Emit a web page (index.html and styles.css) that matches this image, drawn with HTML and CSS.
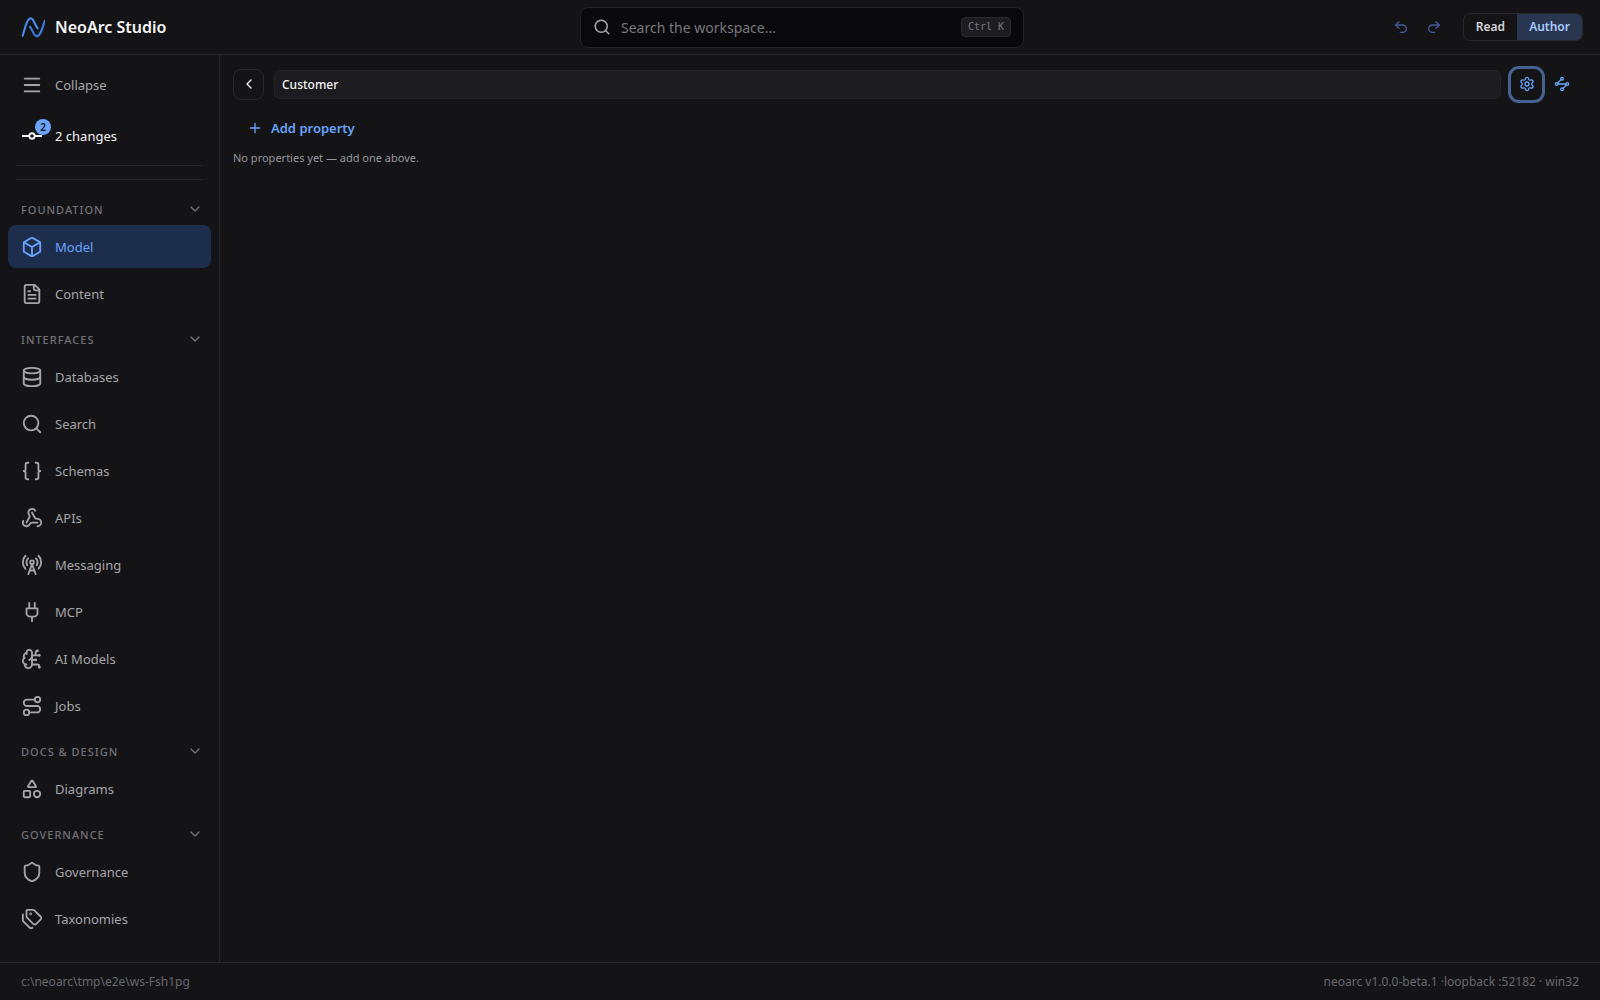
FILE: index.html
```html
<!DOCTYPE html>
<html lang="en">

<head>
    <meta charset="UTF-8">
    <meta name="viewport" content="width=device-width, initial-scale=1.0">
    <title>NeoArc Studio</title>
    <link rel="stylesheet" href="styles.css">
</head>

<body>
    <!-- Top bar -->
    <header class="topbar">
        <div class="brand">
            <svg class="logo" viewBox="0 0 24 24"><path class="logo-main" d="M1.700 20.700C3.500 14.500 6 3.300 9.700 3.300c3 0 3.800 6.500 7 10"/><path class="logo-inner" d="M9 11.700c2.500 2.500 3.500 9.500 6.700 9.500 3.800 0 6-8.500 8-15.500"/></svg>
            <span>NeoArc Studio</span>
        </div>

        <div class="search">
            <svg class="icon icon-sm" viewBox="0 0 24 24"><circle cx="11" cy="11" r="8"/><path d="m21 21-4.300-4.300"/></svg>
            <input type="text" placeholder="Search the workspace..." aria-label="Search the workspace">
            <kbd>Ctrl K</kbd>
        </div>

        <div class="actions">
            <button class="history" aria-label="Undo"><svg class="icon icon-xs" viewBox="0 0 24 24"><path d="M9 14 4 9l5-5"/><path d="M4 9h10.5a5.5 5.5 0 0 1 0 11H11"/></svg></button>
            <button class="history" aria-label="Redo"><svg class="icon icon-xs" viewBox="0 0 24 24"><path d="m15 14 5-5-5-5"/><path d="M20 9H9.500a5.500 5.500 0 0 0 0 11H13"/></svg></button>
            <div class="mode">
                <button>Read</button>
                <button class="selected">Author</button>
            </div>
        </div>
    </header>

    <div class="workspace">
        <!-- Sidebar -->
        <aside class="sidebar">
            <button class="nav-item"><svg class="icon" viewBox="0 0 24 24"><path d="M4 5h16M4 12h16M4 19h16"/></svg>Collapse</button>
            <button class="nav-item changes">
                <span class="changes-icon">
                    <svg class="icon" viewBox="0 0 24 24"><circle cx="12" cy="12" r="3"/><path d="M2 12h7M15 12h7"/></svg>
                    <span class="badge">2</span>
                </span>
                2 changes
            </button>
            <div class="divider"></div>

            <nav>
                <section class="group">
                    <button class="group-title">Foundation <svg class="icon icon-xs" viewBox="0 0 24 24"><path d="m6 9 6 6 6-6"/></svg></button>
                    <a href="#model" class="nav-item active"><svg class="icon" viewBox="0 0 24 24"><path d="M21 8a2 2 0 0 0-1-1.730l-7-4a2 2 0 0 0-2 0l-7 4A2 2 0 0 0 3 8v8a2 2 0 0 0 1 1.730l7 4a2 2 0 0 0 2 0l7-4A2 2 0 0 0 21 16Z"/><path d="m3.300 7 8.700 5 8.700-5M12 22V12"/></svg>Model</a>
                    <a href="#content" class="nav-item"><svg class="icon" viewBox="0 0 24 24"><path d="M15 2H6a2 2 0 0 0-2 2v16a2 2 0 0 0 2 2h12a2 2 0 0 0 2-2V7Z"/><path d="M14 2v4a2 2 0 0 0 2 2h4M10 9H8M16 13H8M16 17H8"/></svg>Content</a>
                </section>

                <section class="group">
                    <button class="group-title">Interfaces <svg class="icon icon-xs" viewBox="0 0 24 24"><path d="m6 9 6 6 6-6"/></svg></button>
                    <a href="#databases" class="nav-item"><svg class="icon" viewBox="0 0 24 24"><ellipse cx="12" cy="5" rx="9" ry="3"/><path d="M3 5v14a9 3 0 0 0 18 0V5"/><path d="M3 12a9 3 0 0 0 18 0"/></svg>Databases</a>
                    <a href="#search" class="nav-item"><svg class="icon" viewBox="0 0 24 24"><circle cx="11" cy="11" r="8"/><path d="m21 21-4.300-4.300"/></svg>Search</a>
                    <a href="#schemas" class="nav-item"><svg class="icon" viewBox="0 0 24 24"><path d="M8 3H7a2 2 0 0 0-2 2v5a2 2 0 0 1-2 2 2 2 0 0 1 2 2v5a2 2 0 0 0 2 2h1"/><path d="M16 21h1a2 2 0 0 0 2-2v-5a2 2 0 0 1 2-2 2 2 0 0 1-2-2V5a2 2 0 0 0-2-2h-1"/></svg>Schemas</a>
                    <a href="#apis" class="nav-item"><svg class="icon" viewBox="0 0 24 24"><path d="M18 16.980h-5.990c-1.100 0-1.950.94-2.480 1.900A4 4 0 0 1 2 17c.01-.7.2-1.400.57-2"/><path d="m6 17 3.130-5.780c.53-.97.1-2.180-.5-3.100a4 4 0 1 1 6.890-4.060"/><path d="m12 6 3.130 5.730C15.660 12.700 16.900 13 18 13a4 4 0 0 1 0 8"/></svg>APIs</a>
                    <a href="#messaging" class="nav-item"><svg class="icon" viewBox="0 0 24 24"><path d="M4.900 16.100C1 12.200 1 5.800 4.900 1.900M7.800 4.700a6.140 6.140 0 0 0-.8 7.500"/><circle cx="12" cy="9" r="2"/><path d="M16.200 4.800c2 2 2.260 5.110.8 7.470M19.100 1.900a9.960 9.960 0 0 1 0 14.100M9.500 18h5M8 22l4-11 4 11"/></svg>Messaging</a>
                    <a href="#mcp" class="nav-item"><svg class="icon" viewBox="0 0 24 24"><path d="M12 22v-5M9 8V2M15 8V2M18 8v5a4 4 0 0 1-4 4h-4a4 4 0 0 1-4-4V8Z"/></svg>MCP</a>
                    <a href="#ai-models" class="nav-item"><svg class="icon" viewBox="0 0 24 24"><path d="M12 5a3 3 0 1 0-5.997.125 4 4 0 0 0-2.526 5.770 4 4 0 0 0 .556 6.588A4 4 0 1 0 12 18Z"/><path d="M9 13a4.500 4.500 0 0 0 3-4M6.003 5.125A3 3 0 0 0 6.401 6.500M3.477 10.896a4 4 0 0 1 .585-.396M6 18a4 4 0 0 1-1.967-.516M12 13h4M12 18h6a2 2 0 0 1 2 2v1M12 8h8M16 8V5a2 2 0 0 1 2-2"/><circle cx="16" cy="13" r=".5"/><circle cx="18" cy="3" r=".5"/><circle cx="20" cy="21" r=".5"/><circle cx="20" cy="8" r=".5"/></svg>AI Models</a>
                    <a href="#jobs" class="nav-item"><svg class="icon" viewBox="0 0 24 24"><circle cx="6" cy="19" r="3"/><path d="M9 19h8.500a3.500 3.500 0 0 0 0-7h-11a3.500 3.500 0 0 1 0-7H15"/><circle cx="18" cy="5" r="3"/></svg>Jobs</a>
                </section>

                <section class="group">
                    <button class="group-title">Docs &amp; Design <svg class="icon icon-xs" viewBox="0 0 24 24"><path d="m6 9 6 6 6-6"/></svg></button>
                    <a href="#diagrams" class="nav-item"><svg class="icon" viewBox="0 0 24 24"><path d="M8.300 10a.7.7 0 0 1-.626-1.079L11.400 3a.7.7 0 0 1 1.198-.043L16.300 8.900a.7.7 0 0 1-.572 1.100Z"/><rect x="3" y="14" width="7" height="7" rx="1"/><circle cx="17.500" cy="17.500" r="3.500"/></svg>Diagrams</a>
                </section>

                <section class="group">
                    <button class="group-title">Governance <svg class="icon icon-xs" viewBox="0 0 24 24"><path d="m6 9 6 6 6-6"/></svg></button>
                    <a href="#governance" class="nav-item"><svg class="icon" viewBox="0 0 24 24"><path d="M20 13c0 5-3.500 7.500-7.660 8.950a1 1 0 0 1-.67-.01C7.500 20.500 4 18 4 13V6a1 1 0 0 1 1-1c2 0 4.500-1.200 6.240-2.720a1.170 1.170 0 0 1 1.520 0C14.510 3.810 17 5 19 5a1 1 0 0 1 1 1z"/></svg>Governance</a>
                    <a href="#taxonomies" class="nav-item"><svg class="icon" viewBox="0 0 24 24"><path d="M13.172 2a2 2 0 0 1 1.414.586l6.710 6.710a2.400 2.400 0 0 1 0 3.408l-4.592 4.592a2.400 2.400 0 0 1-3.408 0l-6.710-6.710A2 2 0 0 1 6 9.172V3a1 1 0 0 1 1-1z"/><path d="M2 7v6.172a2 2 0 0 0 .586 1.414l6.710 6.710a2.400 2.400 0 0 0 3.191.193"/><circle cx="10.500" cy="6.500" r=".5"/></svg>Taxonomies</a>
                </section>
            </nav>
        </aside>

        <!-- Entity editor -->
        <main class="editor">
            <div class="editor-bar">
                <button class="back" aria-label="Back"><svg class="icon icon-xs" viewBox="0 0 24 24"><path d="m15 18-6-6 6-6"/></svg></button>
                <input class="entity-name" type="text" value="Customer" aria-label="Entity name">
                <button class="tool focused" aria-label="Settings"><svg class="icon icon-xs" viewBox="0 0 24 24"><path d="M9.671 4.136a2.340 2.340 0 0 1 4.659 0 2.340 2.340 0 0 0 3.319 1.915 2.340 2.340 0 0 1 2.330 4.033 2.340 2.340 0 0 0 0 3.831 2.340 2.340 0 0 1-2.330 4.033 2.340 2.340 0 0 0-3.319 1.915 2.340 2.340 0 0 1-4.659 0 2.340 2.340 0 0 0-3.320-1.915 2.340 2.340 0 0 1-2.330-4.033 2.340 2.340 0 0 0 0-3.831A2.340 2.340 0 0 1 6.350 6.051a2.340 2.340 0 0 0 3.319-1.915"/><circle cx="12" cy="12" r="3"/></svg></button>
                <button class="tool" aria-label="Relationships"><svg class="icon icon-xs" viewBox="0 0 24 24"><path d="m10.586 5.414-5.172 5.172M18.586 13.414l-5.172 5.172M6 12h12"/><circle cx="12" cy="20" r="2"/><circle cx="12" cy="4" r="2"/><circle cx="20" cy="12" r="2"/><circle cx="4" cy="12" r="2"/></svg></button>
            </div>
            <button class="add"><svg class="icon icon-xs" viewBox="0 0 24 24"><path d="M5 12h14M12 5v14"/></svg>Add property</button>
            <p class="empty">No properties yet — add one above.</p>
        </main>
    </div>

    <!-- Status bar -->
    <footer class="statusbar">
        <span>c:\neoarc\tmp\e2e\ws-Fsh1pg</span>
        <span>neoarc v1.0.0-beta.1 ·loopback :52182 · win32</span>
    </footer>
</body>

</html>
```

FILE: styles.css
```css
* {
    box-sizing: border-box;
}

body {
    margin: 0;
    min-height: 100vh;
    display: flex;
    flex-direction: column;
    background-color: #141416;
    color: #f4f4f5;
    font-family: "Noto Sans", "Open Sans", sans-serif;
    font-size: 13px;
}

button,
input {
    margin: 0;
    font-family: inherit;
    font-size: 13px;
    color: inherit;
}

button {
    padding: 0;
    border: none;
    background: none;
    cursor: pointer;
}

.icon {
    width: 22px;
    height: 22px;
    flex-shrink: 0;
    display: block;
    fill: none;
    stroke: currentColor;
    stroke-width: 2;
    stroke-linecap: round;
    stroke-linejoin: round;
}

.icon-sm {
    width: 18px;
    height: 18px;
}

.icon-xs {
    width: 16px;
    height: 16px;
}

/* Top bar */
.topbar {
    display: flex;
    align-items: center;
    height: 55px;
    padding: 0 17px 0 21px;
    border-bottom: 1px solid #29292c;
}

.brand,
.actions {
    flex: 1;
    display: flex;
    align-items: center;
}

.brand {
    gap: 10px;
    font-size: 16px;
    font-weight: 600;
}

.logo {
    width: 24px;
    height: 24px;
    fill: none;
    stroke-width: 2;
    stroke-linecap: round;
}

.logo-main {
    stroke: #4a8ff0;
}

.logo-inner {
    stroke: #3b7de0;
}

.search {
    display: flex;
    align-items: center;
    gap: 10px;
    width: 444px;
    height: 41px;
    padding: 0 12px;
    border: 1px solid #242427;
    border-radius: 8px;
    background-color: #09090b;
    color: #a9a9ae;
}

.search input {
    flex: 1;
    min-width: 0;
    padding: 0;
    border: none;
    outline: none;
    background: none;
    font-size: 14px;
}

.search input::placeholder {
    color: #77777d;
    opacity: 1;
}

kbd {
    padding: 0 6px;
    border: 1px solid #2b2b2f;
    border-radius: 4px;
    background-color: #1d1d21;
    color: #77777d;
    font-family: "DejaVu Sans Mono", monospace;
    font-size: 10px;
    line-height: 18px;
}

.actions {
    justify-content: flex-end;
    gap: 17px;
}

.history {
    color: #42599b;
}

.mode {
    display: flex;
    margin-left: 4px;
    border: 1px solid #29292c;
    border-radius: 7px;
    overflow: hidden;
}

.mode button {
    padding: 0 12px;
    line-height: 26px;
    font-size: 12px;
    font-weight: 600;
    color: #d4d4d8;
}

.mode .selected {
    background-color: #293650;
    color: #a9cbff;
}

/* Sidebar */
.workspace {
    flex: 1;
    display: flex;
}

.sidebar {
    width: 220px;
    flex-shrink: 0;
    padding: 8px;
    border-right: 1px solid #29292c;
}

.nav-item {
    display: flex;
    align-items: center;
    gap: 12px;
    width: 100%;
    height: 43px;
    padding: 0 13px;
    border-radius: 8px;
    color: #a5a5aa;
    text-decoration: none;
}

.nav-item + .nav-item {
    margin-top: 4px;
}

.nav-item.active {
    background-color: #1d2e4d;
    color: #69a3fb;
}

.sidebar .nav-item.changes {
    margin-top: 8px;
    color: #f4f4f5;
}

.changes-icon {
    position: relative;
}

.badge {
    position: absolute;
    top: -6px;
    right: -8px;
    width: 16px;
    height: 16px;
    border-radius: 8px;
    background-color: #69a3fb;
    color: #141416;
    font-size: 10px;
    font-weight: 600;
    line-height: 16px;
    text-align: center;
}

.divider {
    height: 15px;
    margin: 8px 8px 17px;
    border-top: 1px solid #252528;
    border-bottom: 1px solid #252528;
}

.group {
    margin-bottom: 12px;
}

.group-title {
    display: flex;
    align-items: center;
    justify-content: space-between;
    width: 100%;
    height: 24px;
    margin-bottom: 4px;
    padding: 0 8px 0 13px;
    color: #717177;
    font-size: 11px;
    font-weight: 500;
    letter-spacing: 1px;
    text-transform: uppercase;
}

/* Editor */
.editor {
    flex: 1;
    padding: 12px 23px 12px 13px;
}

.editor-bar {
    display: flex;
    align-items: center;
    gap: 10px;
    height: 34px;
}

.back,
.tool {
    display: flex;
    align-items: center;
    justify-content: center;
    width: 31px;
    height: 31px;
    border-radius: 8px;
}

.back {
    border: 1px solid #29292c;
}

.entity-name {
    flex: 1;
    min-width: 0;
    height: 29px;
    padding: 0 7px;
    border: 1px solid #242427;
    border-radius: 6px;
    background-color: #1c1c20;
    font-size: 12px;
    font-weight: 500;
}

.tool {
    color: #69a3fb;
}

.tool + .tool {
    margin-left: -6px;
}

.focused {
    outline: 3px solid #466293;
}

.add {
    display: flex;
    align-items: center;
    gap: 8px;
    height: 34px;
    margin-top: 10px;
    padding: 0 14px;
    color: #69a3fb;
    font-weight: 600;
}

.empty {
    margin: 4px 0 0;
    color: #97979c;
    font-size: 11px;
    line-height: 18px;
}

/* Status bar */
.statusbar {
    display: flex;
    align-items: center;
    justify-content: space-between;
    height: 38px;
    padding: 0 21px;
    border-top: 1px solid #29292c;
    color: #68686e;
    font-size: 12px;
}
```
